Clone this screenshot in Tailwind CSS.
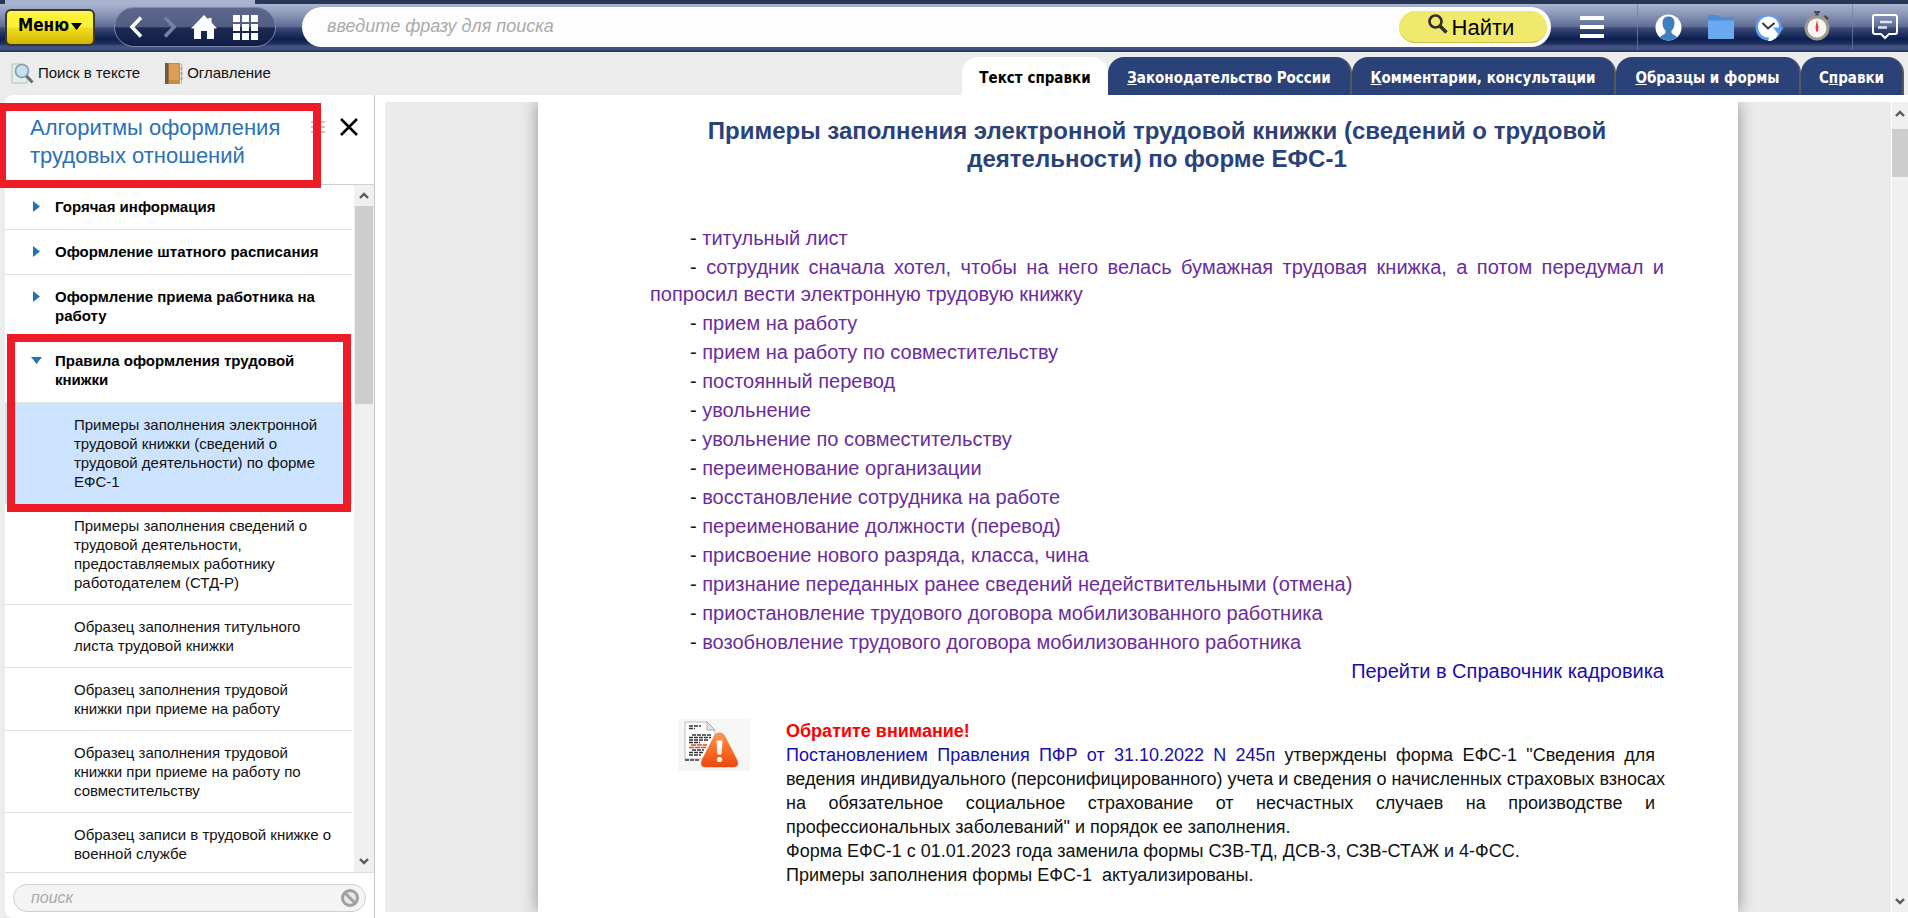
<!DOCTYPE html>
<html lang="ru">
<head>
<meta charset="utf-8">
<title>Алгоритмы оформления трудовых отношений</title>
<script src="https://cdn.jsdelivr.net/npm/@tailwindcss/browser@4"></script>
</head>
<body class="relative flex h-screen flex-col overflow-hidden bg-[#ececec] font-['Liberation_Sans',Arial,sans-serif] text-[15px] text-[#111]">

<!-- Top bar -->
<div class="h-1 shrink-0 bg-[#283655] pl-[5px]"><div class="h-1 w-[250px] bg-[#a9b4d0]"></div></div>
<header class="flex h-12 shrink-0 items-center border-b-2 border-[#2a3a68] bg-[linear-gradient(#a9b4d0_0%,#8793b4_25%,#5f6d95_49%,#3c4b79_52%,#0b1f50_76%,#1c2f60_86%,#43517f_92%,#43517f_100%)] pl-[5px]">
  <button type="button" class="flex h-[37px] w-[90px] shrink-0 items-center justify-center gap-0.5 rounded-md border-2 border-[#3a3a1c] bg-[linear-gradient(#fbf465_0%,#fdf22e_20%,#f8f03c_48%,#f0de1c_52%,#d2b404_100%)] pb-0.5 font-['DejaVu_Sans_Condensed','Noto_Sans',sans-serif] text-[17px] font-bold text-black">Меню<svg class="h-[7px] w-[11px]" viewBox="0 0 11 7"><path d="M0 0h11L5.500 7z"/></svg></button>

  <nav class="ml-[19px] flex h-10 w-[162px] shrink-0 items-center rounded-full border border-[#7f8aab] bg-[linear-gradient(#5c678a_0%,#525e84_50%,#1c2a54_52%,#0e1c45_100%)] pl-3.5 text-white">
    <button type="button" aria-label="Назад"><svg class="h-[22px] w-[14px]" viewBox="0 0 14 22" fill="none" stroke="#fff" stroke-width="3.600"><path d="M12 1.500L3 11l9 9.500"/></svg></button>
    <button type="button" aria-label="Вперёд" class="ml-5"><svg class="h-[22px] w-[14px]" viewBox="0 0 14 22" fill="none" stroke="#7581a0" stroke-width="3.600"><path d="M2 1.500L11 11l-9 9.500"/></svg></button>
    <button type="button" aria-label="Домой" class="ml-3.5"><svg class="h-[25px] w-[26px]" viewBox="0 0 26 25" fill="#fff"><path d="M13 0l4.500 4.500V3h3v4.500L26 13.500h-3V24h-7v-8h-6v8H3V13.500H0z"/></svg></button>
    <button type="button" aria-label="Разделы" class="ml-4"><svg class="h-[25px] w-[25px]" viewBox="0 0 25 25" fill="#fff"><path d="M0 0h7v7H0zM9 0h7v7H9zM18 0h7v7h-7zM0 9h7v7H0zM9 9h7v7H9zM18 9h7v7h-7zM0 18h7v7H0zM9 18h7v7H9zM18 18h7v7h-7z"/></svg></button>
  </nav>

  <form class="ml-[26px] flex h-10 min-w-0 flex-1 items-center rounded-full bg-[#fdfdfd] pr-1">
    <input type="text" aria-label="Поиск" placeholder="введите фразу для поиска" class="min-w-0 flex-1 bg-transparent pb-0.5 pl-[25px] text-[18px] italic outline-none placeholder:text-[#aaa]">
    <button type="button" class="flex h-8 w-[148px] shrink-0 items-center justify-center gap-1 rounded-full border-b border-[#c9c04a] bg-[#f1e96c] pt-0.5 pr-1 text-[22px] text-black"><svg class="mb-2 h-5 w-5" viewBox="0 0 20 20" fill="none" stroke="#2e2e2e"><circle cx="7.500" cy="7.500" r="6" stroke-width="2.600"/><path d="M12 12l6.500 6.500" stroke-width="3.600"/></svg>Найти</button>
  </form>

  <button type="button" aria-label="Список" class="ml-[29px] shrink-0"><svg class="h-[22px] w-6" viewBox="0 0 24 22" fill="#fff"><path d="M0 0h24v4H0zM0 9h24v4H0zM0 18h24v4H0z"/></svg></button>

  <div class="ml-[33px] flex h-full w-[216px] shrink-0 items-center gap-[25px] border-x border-[#7482a6]/70 pl-[17px]">
    <button type="button" aria-label="Профиль"><svg class="h-[27px] w-[27px]" viewBox="0 0 27 27"><defs><clipPath id="c1"><circle cx="13.500" cy="13.500" r="13"/></clipPath></defs><circle cx="13.500" cy="13.500" r="13" fill="#fff"/><path clip-path="url(#c1)" fill="#3d7fc0" d="M13.500 2.500c4 0 6 2.500 6 6.500 0 3.500-1.200 6-3 7.500v2.500c1 1.500 3.500 2 5.500 4v4H5v-4c2-2 4.500-2.500 5.500-4v-2.500c-1.800-1.500-3-4-3-7.500 0-4 2-6.500 6-6.500z"/></svg></button>
    <button type="button" aria-label="Избранное" class="ml-px"><svg class="h-6 w-[26px]" viewBox="0 0 26 24"><path fill="#4a8fd6" d="M0 1q0-1 1-1h8l3 2h13q1 0 1 1v6H0z"/><path fill="#6aa9f0" d="M0 5.500h26V23q0 1-1 1H1q-1 0-1-1z"/></svg></button>
    <button type="button" aria-label="История" class="-ml-1"><svg class="h-[27px] w-[29px]" viewBox="0 0 29 27"><circle cx="13.500" cy="13.500" r="13" fill="#5fa0ee"/><circle cx="13.500" cy="13" r="10.500" fill="#fff"/><path d="M13 27l2-5 9-4-3 6-5 3z" fill="#fff"/><path d="M18 13.500h11l-5.500 7z" fill="#5fa0ee"/><path d="M7.500 9l5.500 5.500L19.500 9" fill="none" stroke="#334" stroke-width="2"/></svg></button>
    <button type="button" aria-label="Таймер" class="-ml-[5px] mb-0.5"><svg class="h-[30px] w-[26px]" viewBox="0 0 26 30"><path d="M10 0h6v2h-1.500v4h-3V2H10zM21 4l4 3-2 2-3-3z" fill="#4c4a4a"/><circle cx="13" cy="17" r="11" fill="#f7f5f2" stroke="#a09a92" stroke-width="3"/><path d="M13 9l1.500 7-.5 4.500h-2l-.5-4.500z" fill="#e34040"/></svg></button>
  </div>
  <button type="button" aria-label="Сообщения" class="ml-[19px] mr-2.5 shrink-0"><svg class="h-[26px] w-[26px]" viewBox="0 0 26 26" fill="none" stroke="#fff" stroke-width="2"><path d="M3 1h20q2 0 2 2v15q0 2-2 2h-6l-4 4-4-4H3q-2 0-2-2V3q0-2 2-2z"/><path d="M8 8h12M6 13.500h9" stroke-width="2.500" stroke="#dfe4f0"/></svg></button>
</header>

<!-- Toolbar and tabs -->
<div class="flex h-[43px] shrink-0 items-end justify-between pr-1">
  <div class="flex h-full items-center gap-[25px] pl-[11px]">
    <button type="button" class="flex items-center gap-1"><svg class="h-[21px] w-[23px]" viewBox="0 0 23 21"><path d="M1 1h12l3 3v16H1z" fill="#e3efef" stroke="#a9c4c4"/><circle cx="11" cy="8" r="6.500" fill="#c5e2f2" stroke="#8d9aa6" stroke-width="1.600"/><path d="M15.500 13l6 6.500" stroke="#6b6b6b" stroke-width="3"/></svg>Поиск в тексте</button>
    <button type="button" class="flex items-center gap-1"><svg class="h-[21px] w-[18px]" viewBox="0 0 18 21"><path d="M14 1h2.500v19H14z" fill="#eee" stroke="#999" stroke-width=".6"/><path d="M15.500 4h2v3h-2zM15.500 9h2v3h-2zM15.500 14h2v3h-2z" fill="#a9a9a9"/><rect width="15" height="21" rx="1" fill="#c98c3e"/><path d="M4 1h10v16H4z" fill="#dba055"/><path d="M0 0h3.500v21H0z" fill="#6d5a48"/></svg>Оглавление</button>
  </div>
  <nav class="flex h-[38px] font-['DejaVu_Sans_Condensed','Noto_Sans',sans-serif] text-[15px] font-bold text-white">
    <a href="#" class="flex w-[146px] items-center justify-center rounded-t-2xl bg-white pt-1 text-black">Текст справки</a>
    <a href="#" class="flex w-[244px] items-center justify-center rounded-t-2xl border-r-2 border-[#57575e] bg-[#2b4279] pt-1"><span><u>З</u>аконодательство России</span></a>
    <a href="#" class="flex w-[264px] items-center justify-center rounded-t-2xl border-r-2 border-[#57575e] bg-[#2b4279] pt-1"><span><u>К</u>омментарии, консультации</span></a>
    <a href="#" class="flex w-[185px] items-center justify-center rounded-t-2xl border-r-2 border-[#57575e] bg-[#2b4279] pt-1"><span><u>О</u>бразцы и формы</span></a>
    <a href="#" class="flex w-[103px] items-center justify-center rounded-t-2xl border-r-2 border-[#57575e] bg-[#2b4279] pt-1"><span>С<u>п</u>равки</span></a>
  </nav>
</div>

<div class="flex min-h-0 flex-1 pl-[5px]">
  <!-- Sidebar -->
  <aside class="flex w-[370px] shrink-0 flex-col rounded-l-lg border-r border-[#c8c8c8] bg-white">
    <div class="flex h-[90px] shrink-0 items-start border-b border-[#d0d0d0] pl-[25px] pt-[19px]">
      <h1 class="w-[281px] shrink-0 text-[22px] leading-7 text-[#2a72b5]">Алгоритмы оформления трудовых отношений</h1>
      <svg class="mt-[7px] h-[13px] w-[14px]" viewBox="0 0 14 13" fill="#c4c4c4"><path d="M0 0h14v2H0zM0 5h14v2H0zM0 10h14v2H0z"/></svg>
      <button type="button" aria-label="Закрыть" class="ml-[15px] mt-1"><svg class="h-[18px] w-[18px]" viewBox="0 0 18 18" stroke="#000" stroke-width="2.500"><path d="M1 1l16 16M17 1L1 17"/></svg></button>
    </div>
    <div class="flex min-h-0 flex-1">
      <ul class="min-w-0 flex-1 overflow-hidden leading-[19px] [&>li]:border-b [&>li]:border-[#e2e2e2]">
        <li><a href="#" class="flex pt-3 pb-[13px] pl-7 pr-4 font-bold text-black"><svg class="mt-1 mr-[15px] h-[11px] w-[7px] shrink-0" viewBox="0 0 7 11" fill="#2472b8"><path d="M0 0l7 5.500L0 11z"/></svg>Горячая информация</a></li>
        <li><a href="#" class="flex pt-3 pb-[13px] pl-7 pr-4 font-bold text-black"><svg class="mt-1 mr-[15px] h-[11px] w-[7px] shrink-0" viewBox="0 0 7 11" fill="#2472b8"><path d="M0 0l7 5.500L0 11z"/></svg>Оформление штатного расписания</a></li>
        <li><a href="#" class="flex pt-3 pb-[13px] pl-7 pr-4 font-bold text-black"><svg class="mt-1 mr-[15px] h-[11px] w-[7px] shrink-0" viewBox="0 0 7 11" fill="#2472b8"><path d="M0 0l7 5.500L0 11z"/></svg>Оформление приема работника на работу</a></li>
        <li><a href="#" class="flex pt-3 pb-[13px] pl-[26px] pr-4 font-bold text-black"><svg class="mt-1.5 mr-[13px] h-[7px] w-[11px] shrink-0" viewBox="0 0 11 7" fill="#2472b8"><path d="M0 0h11L5.500 7z"/></svg>Правила оформления трудовой книжки</a></li>
        <li><a href="#" class="block bg-[#cce4ff] py-3 pl-[69px] pr-4">Примеры заполнения электронной трудовой книжки (сведений о трудовой деятельности) по форме ЕФС-1</a></li>
        <li><a href="#" class="block py-3 pl-[69px] pr-8">Примеры заполнения сведений о трудовой деятельности, предоставляемых работнику работодателем (СТД-Р)</a></li>
        <li><a href="#" class="block py-3 pl-[69px] pr-8">Образец заполнения титульного листа трудовой книжки</a></li>
        <li><a href="#" class="block py-3 pl-[69px] pr-8">Образец заполнения трудовой книжки при приеме на работу</a></li>
        <li><a href="#" class="block py-3 pl-[69px] pr-8">Образец заполнения трудовой книжки при приеме на работу по совместительству</a></li>
        <li><a href="#" class="block py-3 pl-[69px] pr-2">Образец записи в трудовой книжке о военной службе</a></li>
      </ul>
      <div class="ml-0.5 flex w-5 shrink-0 flex-col items-center bg-[#f0f0f0]">
        <svg class="my-[7px] h-[7px] w-[10px] shrink-0" viewBox="0 0 10 7" fill="none" stroke="#5a5a5a" stroke-width="2.400"><path d="M1 6l4-4 4 4"/></svg>
        <div class="h-[198px] w-[18px] shrink-0 bg-[#cdcdcd]"></div>
        <svg class="mt-auto mb-[7px] h-[7px] w-[10px] shrink-0" viewBox="0 0 10 7" fill="none" stroke="#5a5a5a" stroke-width="2.400"><path d="M1 1l4 4 4-4"/></svg>
      </div>
    </div>
    <div class="flex h-[46px] shrink-0 items-center border-t border-[#dcdcdc] pl-2 pr-2 pt-1 pb-0">
      <div class="flex h-7 flex-1 items-center rounded-full border border-[#cfcfcf] bg-[#f4f4f4] pr-1.5">
        <input type="text" aria-label="Поиск в списке" placeholder="поиск" class="min-w-0 flex-1 bg-transparent pl-[17px] text-base italic outline-none placeholder:text-[#aaa]">
        <button type="button" aria-label="Очистить"><svg class="h-[18px] w-[18px]" viewBox="0 0 18 18"><circle cx="9" cy="9" r="7.500" fill="#e8e8e8" stroke="#a0a0a0" stroke-width="3"/><path d="M4 4l10 10" stroke="#a0a0a0" stroke-width="3"/></svg></button>
      </div>
    </div>
  </aside>

  <!-- Document -->
  <main class="flex min-w-0 flex-1 bg-white pl-2.5 pt-[7px] pb-1.5">
    <div class="min-w-0 flex-1 overflow-hidden bg-[#ebebeb] px-[153px]">
      <article class="h-full bg-white pl-[112px] pr-[74px] pt-[15px] shadow-[0_0_16px_rgba(0,0,0,0.4)]">
        <h2 class="px-10 text-center text-2xl leading-7 font-bold text-[#2b4279]">Примеры заполнения электронной трудовой книжки (сведений о трудовой деятельности) по форме ЕФС-1</h2>
        <ul class="mt-[52px] text-justify indent-10 text-xl leading-[27px] [&>li]:mb-0.5 [&_a]:text-[#6a2c9c]">
          <li>- <a href="#">титульный лист</a></li>
          <li>- <a href="#">сотрудник сначала хотел, чтобы на него велась бумажная трудовая книжка, а потом передумал и попросил вести электронную трудовую книжку</a></li>
          <li>- <a href="#">прием на работу</a></li>
          <li>- <a href="#">прием на работу по совместительству</a></li>
          <li>- <a href="#">постоянный перевод</a></li>
          <li>- <a href="#">увольнение</a></li>
          <li>- <a href="#">увольнение по совместительству</a></li>
          <li>- <a href="#">переименование организации</a></li>
          <li>- <a href="#">восстановление сотрудника на работе</a></li>
          <li>- <a href="#">переименование должности (перевод)</a></li>
          <li>- <a href="#">присвоение нового разряда, класса, чина</a></li>
          <li>- <a href="#">признание переданных ранее сведений недействительными (отмена)</a></li>
          <li>- <a href="#">приостановление трудового договора мобилизованного работника</a></li>
          <li>- <a href="#">возобновление трудового договора мобилизованного работника</a></li>
        </ul>
        <p class="text-right text-xl leading-[27px]"><a href="#" class="text-[#1a0dab]">Перейти в Справочник кадровика</a></p>
        <section class="mt-[34px] flex pl-7 pr-[9px]">
          <svg class="h-[52px] w-[72px] shrink-0" viewBox="0 0 72 52"><defs><linearGradient id="g1" x1="0" y1="0" x2="0" y2="1"><stop offset="0" stop-color="#ff9a50"/><stop offset=".6" stop-color="#f7651f"/><stop offset="1" stop-color="#e8480c"/></linearGradient></defs><rect width="72" height="52" fill="#f6f6f6"/><path d="M7 3h22l8 8v29H7z" fill="#fff" stroke="#bdbdbd"/><path d="M29 3v8h8z" fill="#e6e6e6" stroke="#aaa"/><g stroke="#333" stroke-width="1.600" stroke-dasharray="4 1"><path d="M11 7h12M11 9.500h6M14 16h19M11 18.500h22M11 21h20M11 23.500h11M14 31h12M11 33.500h14M11 36h12M7 41h14"/></g><path d="M13 26h16M11 28.500h17" stroke="#e8481c" stroke-width="1.700" stroke-dasharray="5 1"/><path d="M41.500 14q3.500 0 5 3L59 41q2.500 6.500-3 7H27q-5.500-.5-3-7l12.500-24q1.500-3 5-3z" fill="url(#g1)" stroke="#e2591f" stroke-width=".6"/><path d="M39 22h5l-1 13h-3z" fill="#fff" stroke="#fff"/><circle cx="41.500" cy="40.500" r="2.600" fill="#fff"/></svg>
          <div class="ml-9 min-w-0 flex-1 text-[18px] leading-6">
            <h3 class="font-bold text-[#ff0000]">Обратите внимание!</h3>
            <p class="[&>span]:block [&>span]:whitespace-nowrap [&>span]:text-justify [&>span]:[text-align-last:justify]">
              <span><a href="#" class="text-[#1a0dab]">Постановлением Правления ПФР от 31.10.2022 N 245п</a> утверждены форма ЕФС-1 "Сведения для</span>
              <span>ведения индивидуального (персонифицированного) учета и сведения о начисленных страховых взносах</span>
              <span>на обязательное социальное страхование от несчастных случаев на производстве и</span>
              профессиональных заболеваний" и порядок ее заполнения.
            </p>
            <p>Форма ЕФС-1 с 01.01.2023 года заменила формы СЗВ-ТД, ДСВ-3, СЗВ-СТАЖ и 4-ФСС.</p>
            <p>Примеры заполнения формы ЕФС-1&nbsp; актуализированы.</p>
          </div>
        </section>
      </article>
    </div>
    <div class="flex w-[17px] shrink-0 flex-col items-center border-l border-white bg-[#f0f0f0]">
      <svg class="mt-2 mb-3 h-[7px] w-[10px] shrink-0" viewBox="0 0 10 7" fill="none" stroke="#5a5a5a" stroke-width="2.400"><path d="M1 6l4-4 4 4"/></svg>
      <div class="h-12 w-full shrink-0 bg-[#cdcdcd]"></div>
      <svg class="mt-auto mb-[7px] h-[7px] w-[10px] shrink-0" viewBox="0 0 10 7" fill="none" stroke="#5a5a5a" stroke-width="2.400"><path d="M1 1l4 4 4-4"/></svg>
    </div>
  </main>
</div>

<!-- Highlight frames -->
<div class="pointer-events-none absolute left-[-2px] top-[103px] h-[85px] w-[323px] border-8 border-[#ee1c25]"></div>
<div class="pointer-events-none absolute left-[7px] top-[334px] h-[178px] w-[344px] border-8 border-[#ee1c25]"></div>
</body>
</html>
